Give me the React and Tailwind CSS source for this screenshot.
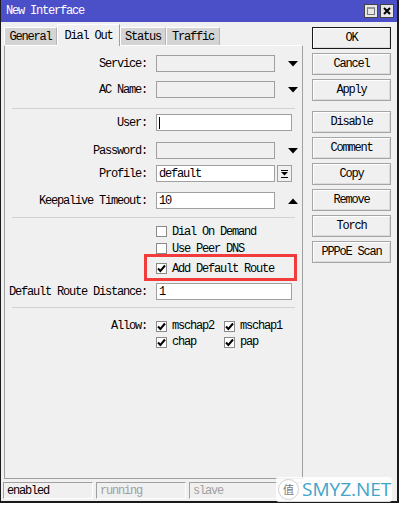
const TriDown = () => (
  <svg width="10" height="6" viewBox="0 0 10 6" className="ml-[5px]">
    <polygon points="0,0 10,0 5,5.5" fill="#000" />
  </svg>
);

const TriUp = () => (
  <svg width="10" height="6" viewBox="0 0 10 6" className="ml-[5px]">
    <polygon points="0,6 10,6 5,0.5" fill="#000" />
  </svg>
);

const Check = () => (
  <svg width="9" height="9" viewBox="0 0 9 9">
    <path d="M1 4.5 L3.4 7 L8 1.5" stroke="#000" strokeWidth="2" fill="none" />
  </svg>
);

const Box = ({ checked }) => (
  <div className="w-[11px] h-[11px] border border-[#8a8a8a] bg-white flex items-center justify-center shrink-0">
    {checked && <Check />}
  </div>
);

const Label = ({ children }) => (
  <div className="w-[143px] text-right pr-[1px] shrink-0 whitespace-nowrap">{children}</div>
);

const Field = ({ value, white, wide, cursor }) => (
  <div
    className={`h-[17px] border border-[#a0a0a0] flex items-center px-[2px] ${white ? "bg-white" : "bg-[#f0f0f0]"} ${wide ? "w-[136px]" : "w-[119px]"}`}
  >
    {cursor && <div className="w-px h-[12px] bg-black" />}
    {value}
  </div>
);

const Row = ({ label, children, className = "" }) => (
  <div className={`flex items-center h-[17px] gap-[8px] ${className}`}>
    <Label>{label}</Label>
    {children}
  </div>
);

const Sep = ({ className = "" }) => <div className={`h-px bg-[#d2d2d2] mx-[7px] ${className}`} />;

const CheckRow = ({ text, checked, className = "" }) => (
  <div className={`flex items-center h-[17px] pl-[151px] gap-[5px] ${className}`}>
    <Box checked={checked} />
    <span className="whitespace-nowrap">{text}</span>
  </div>
);

const Btn = ({ children, def, className = "" }) => (
  <div
    className={`w-[79px] h-[22px] flex items-center justify-center bg-[#f0f0f0] border shadow-[inset_1px_1px_0_#fff,inset_-1px_-1px_0_#dcdcdc] ${def ? "border-[#1a1a1a]" : "border-[#a5a5a5]"} ${className}`}
  >
    {children}
  </div>
);

const Tab = ({ children, active, w }) =>
  active ? (
    <div className={`${w} h-[22px] -mb-px relative z-10 bg-[#f0f0f0] border-t border-l border-white border-r border-r-[#a0a0a0] flex items-start justify-center pt-[2px]`}>
      {children}
    </div>
  ) : (
    <div className={`${w} h-[18px] bg-[#d4d4d4] border-t border-l border-white border-r border-r-[#b4b4b4] flex items-center justify-center`}>
      {children}
    </div>
  );

const StatusBox = ({ children, dim }) => (
  <div className={`w-[90px] h-[17px] border-t border-l border-[#a0a0a0] border-b border-r border-b-white border-r-white flex items-center px-[3px] ${dim ? "text-[#a0a0a0]" : "text-black"}`}>
    {children}
  </div>
);

export default function App() {
  return (
    <div className="w-[402px] h-[506px] bg-white relative overflow-hidden font-['Liberation_Mono',monospace] text-[12px] tracking-[-1.2px] text-black">
      <div className="w-[399px] h-[503px] bg-[#f0f0f0] border-l border-r-2 border-b-2 border-[#1a1a1a] flex flex-col">
        {/* title bar */}
        <div className="h-[22px] bg-[#4b50c9] flex items-center pl-[5px] pr-[3px] text-white shrink-0">
          <span>New Interface</span>
          <div className="ml-auto flex gap-[2px]">
            <div className="w-[14px] h-[14px] bg-[#e6e6e6] border border-[#444] flex items-center justify-center">
              <div className="w-[8px] h-[8px] border border-[#777] border-t-2 border-t-[#999]" />
            </div>
            <div className="w-[14px] h-[14px] bg-[#e6e6e6] border border-[#444] flex items-center justify-center">
              <svg width="8" height="8" viewBox="0 0 8 8">
                <path d="M1 1 L7 7 M7 1 L1 7" stroke="#000" strokeWidth="2" />
              </svg>
            </div>
          </div>
        </div>

        {/* body */}
        <div className="flex h-[460px] shrink-0">
          <div className="pl-[3px] pt-[2px] flex flex-col">
            <div className="flex items-end h-[21px] text-black">
              <Tab w="w-[53px]">General</Tab>
              <Tab w="w-[63px]" active>Dial Out</Tab>
              <Tab w="w-[46px]">Status</Tab>
              <Tab w="w-[54px]">Traffic</Tab>
            </div>
            <div className="w-[299px] h-[434px] border border-[#a0a0a0] border-t-white flex flex-col">
              <Row label="Service:" className="mt-[9px]">
                <Field />
                <TriDown />
              </Row>
              <Row label="AC Name:" className="mt-[9px]">
                <Field />
                <TriDown />
              </Row>
              <Sep className="mt-[10px]" />
              <Row label="User:" className="mt-[5px]">
                <Field white wide cursor />
              </Row>
              <Row label="Password:" className="mt-[11px]">
                <Field />
                <TriDown />
              </Row>
              <Row label="Profile:" className="mt-[6px]">
                <Field white value="default" />
                <div className="w-[15px] h-[17px] ml-[-6px] border border-[#a0a0a0] bg-[#f0f0f0] flex items-center justify-center">
                  <svg width="7" height="8" viewBox="0 0 7 8">
                    <path d="M0 0.5 H7" stroke="#000" strokeWidth="1" />
                    <polygon points="0,2 7,2 3.5,5.5" fill="#000" />
                    <path d="M0 7.5 H7" stroke="#000" strokeWidth="1" />
                  </svg>
                </div>
              </Row>
              <Row label="Keepalive Timeout:" className="mt-[10px]">
                <Field white value="10" />
                <TriUp />
              </Row>
              <Sep className="mt-[8px]" />
              <CheckRow text="Dial On Demand" className="mt-[5px]" />
              <CheckRow text="Use Peer DNS" />
              <CheckRow text="Add Default Route" checked className="mt-[3px]" />
              <Row label="Default Route Distance:" className="mt-[6px]">
                <Field white wide value="1" />
              </Row>
              <Sep className="mt-[7px]" />
              <div className="flex mt-[10px] gap-[8px]">
                <div className="w-[143px] text-right pr-[1px] h-[16px] flex items-center justify-end">Allow:</div>
                <div className="grid grid-cols-[68px_68px]">
                  {[["mschap2"], ["mschap1"], ["chap"], ["pap"]].map(([t]) => (
                    <div key={t} className="flex items-center h-[16px] gap-[5px]">
                      <Box checked />
                      <span>{t}</span>
                    </div>
                  ))}
                </div>
              </div>
            </div>
          </div>

          <div className="ml-[9px] pt-[5px] flex flex-col gap-[4px]">
            <Btn def>OK</Btn>
            <Btn>Cancel</Btn>
            <Btn>Apply</Btn>
            <Btn className="mt-[6px]">Disable</Btn>
            <Btn>Comment</Btn>
            <Btn>Copy</Btn>
            <Btn>Remove</Btn>
            <Btn>Torch</Btn>
            <Btn>PPPoE Scan</Btn>
          </div>
        </div>

        {/* status bar */}
        <div className="h-[19px] flex gap-[3px] pl-[2px] shrink-0">
          <StatusBox>enabled</StatusBox>
          <StatusBox dim>running</StatusBox>
          <StatusBox dim>slave</StatusBox>
          <div className="w-[20px] h-[17px] border-t border-l border-[#a0a0a0] flex items-center px-[3px]">St</div>
        </div>
      </div>

      {/* annotation */}
      <div className="absolute left-[144px] top-[254px] w-[153px] h-[27px] border-[3px] border-[#f23c3c]" />

      {/* watermark */}
      <div className="absolute left-[276px] top-[477px] w-[116px] h-[25px] bg-white/85 rounded-[3px] flex items-center gap-[3px] pl-[2px] tracking-normal">
        <div className="w-[21px] h-[21px] rounded-full bg-white border border-[#d0d0d0] flex items-center justify-center text-[11px] text-[#777] font-['Noto_Sans_CJK_SC',sans-serif]">
          值
        </div>
        <span className="font-['Open_Sans',sans-serif] text-[19px] leading-none text-[#3fa5c8]">SMYZ.NET</span>
      </div>
    </div>
  );
}
